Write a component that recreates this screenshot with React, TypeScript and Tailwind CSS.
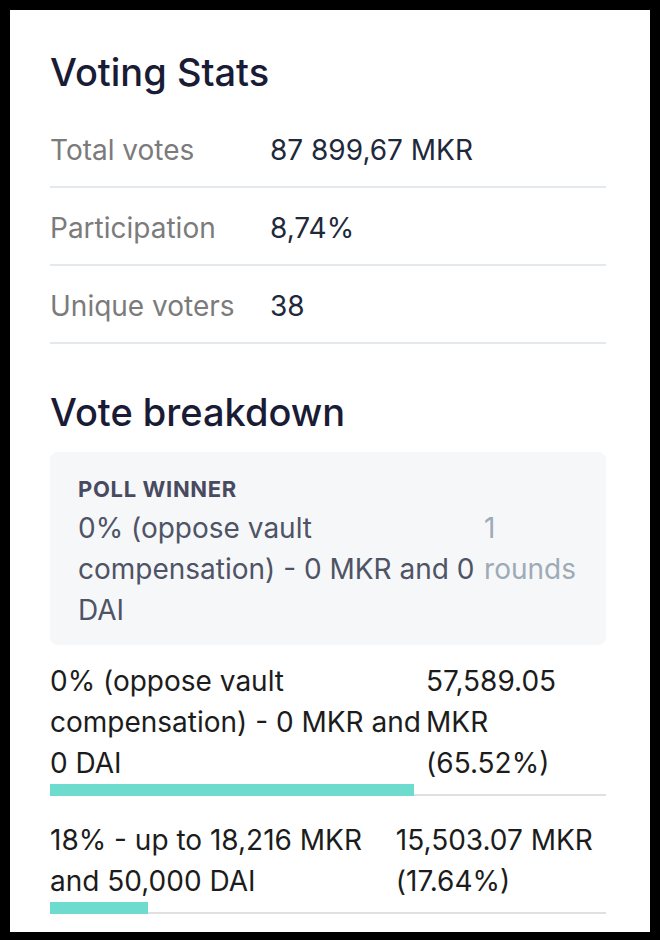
import React from 'react'

const stats = [
    { label: 'Total votes', value: '87 899,67 MKR' },
    { label: 'Participation', value: '8,74%' },
    { label: 'Unique voters', value: '38' },
]

const options = [
    { name: '0% (oppose vault compensation) - 0 MKR and 0 DAI', amount: '57,589.05 MKR', pct: 65.52 },
    { name: '18% - up to 18,216 MKR and 50,000 DAI', amount: '15,503.07 MKR', pct: 17.64 },
]

function StatRow({ label, value }: { label: string; value: string }) {
    return (
        <div className="grid grid-cols-[220px_1fr] border-b-2 border-[#e4e9ee] pt-5 pb-4 text-[28px] leading-10">
            <span className="text-[#7b7b7b]">{label}</span>
            <span className="text-[#1e293b]">{value}</span>
        </div>
    )
}

function OptionRow({ name, amount, pct, first }: { name: string; amount: string; pct: number; first?: boolean }) {
    return (
        <div className={first ? 'mt-4' : 'mt-[24px]'}>
            <div className="flex justify-between text-[28px] leading-[41px] text-[#1c1c1c]">
                <span>{name}</span>
                <span>{amount} ({pct.toFixed(2)}%)</span>
            </div>
            <div className="flex items-end h-3">
                <div className="h-3 bg-[#6ddccf]" style={{ width: `${pct}%` }}></div>
                <div className="flex-1 h-[2px] bg-[#e0e0e0]"></div>
            </div>
        </div>
    )
}

export default function App() {
    return (
        <div className="min-h-screen bg-black px-[10px] pt-[10px]" style={{ fontFamily: 'Inter, "Noto Sans", sans-serif' }}>
            <div className="h-[922px] overflow-hidden bg-white pl-10 pr-[44px] pt-[42px]">
                <h2 className="text-[38px] leading-10 font-medium text-[#1a1b35]">Voting Stats</h2>
                <div className="mt-[18px]">
                    {stats.map(s => <StatRow key={s.label} {...s} />)}
                </div>

                <h2 className="mt-12 text-[38px] leading-10 font-medium text-[#1a1b35]">Vote breakdown</h2>
                <div className="mt-5 rounded-lg bg-[#f6f7f9] pt-6 pb-[14px] pl-7 pr-[30px]">
                    <p className="text-[22px] leading-[26px] font-bold tracking-[0.03em] text-[#484a60]">POLL WINNER</p>
                    <div className="mt-1.5 flex justify-between text-[28px] leading-[41px]">
                        <span className="text-[#4e5365]">0% (oppose vault compensation) - 0 MKR and 0 DAI</span>
                        <span className="text-[#9eabb6]">1 rounds</span>
                    </div>
                </div>

                {options.map((o, i) => <OptionRow key={o.name} {...o} first={i === 0} />)}
            </div>
        </div>
    )
}
